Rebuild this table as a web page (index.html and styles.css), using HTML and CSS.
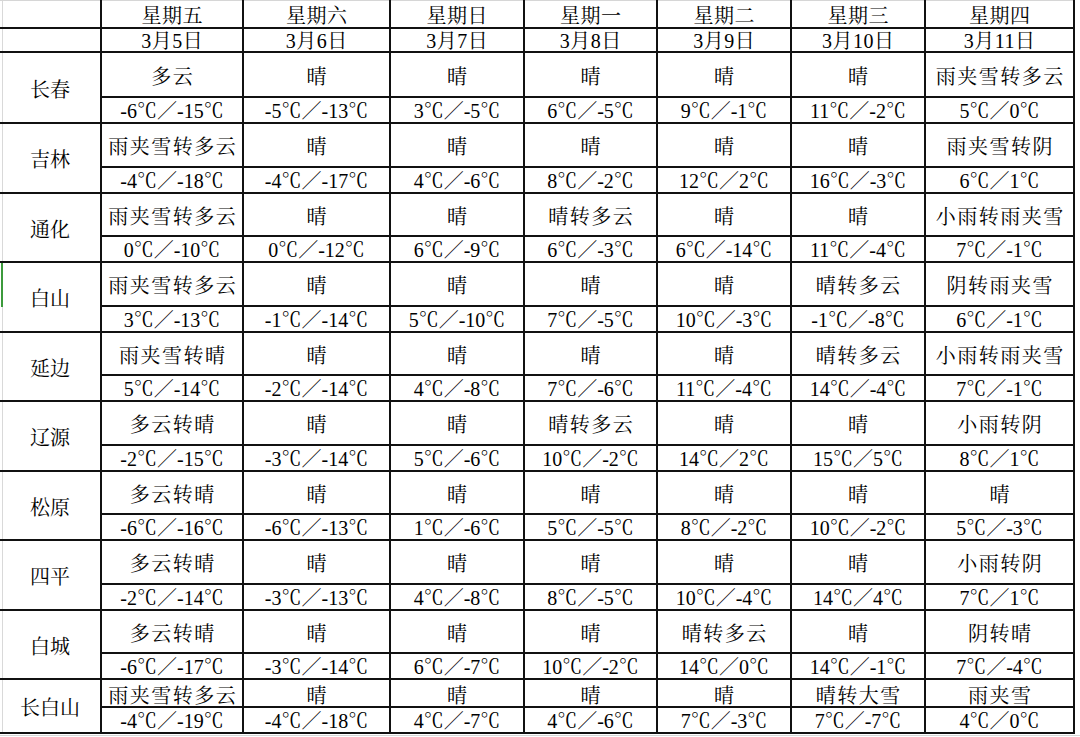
FILE: index.html
```html
<!DOCTYPE html>
<html lang="zh-CN">
<head>
<meta charset="utf-8">
<title>吉林省一周天气预报</title>
<link rel="stylesheet" href="styles.css">
</head>
<body>
<div class="sheet">
  <div class="grid">
    <div class="c hd top blank"></div>
    <div class="c hd top">星期五</div>
    <div class="c hd top">星期六</div>
    <div class="c hd top">星期日</div>
    <div class="c hd top">星期一</div>
    <div class="c hd top">星期二</div>
    <div class="c hd top">星期三</div>
    <div class="c hd top">星期四</div>

    <div class="c hd blank"></div>
    <div class="c hd">3月5日</div>
    <div class="c hd">3月6日</div>
    <div class="c hd">3月7日</div>
    <div class="c hd">3月8日</div>
    <div class="c hd">3月9日</div>
    <div class="c hd">3月10日</div>
    <div class="c hd">3月11日</div>

    <div class="c city">长春</div>
    <div class="c wx">多云</div><div class="c wx">晴</div><div class="c wx">晴</div><div class="c wx">晴</div><div class="c wx">晴</div><div class="c wx">晴</div><div class="c wx">雨夹雪转多云</div>
    <div class="c tp">-6℃／-15℃</div><div class="c tp">-5℃／-13℃</div><div class="c tp">3℃／-5℃</div><div class="c tp">6℃／-5℃</div><div class="c tp">9℃／-1℃</div><div class="c tp">11℃／-2℃</div><div class="c tp">5℃／0℃</div>

    <div class="c city">吉林</div>
    <div class="c wx">雨夹雪转多云</div><div class="c wx">晴</div><div class="c wx">晴</div><div class="c wx">晴</div><div class="c wx">晴</div><div class="c wx">晴</div><div class="c wx">雨夹雪转阴</div>
    <div class="c tp">-4℃／-18℃</div><div class="c tp">-4℃／-17℃</div><div class="c tp">4℃／-6℃</div><div class="c tp">8℃／-2℃</div><div class="c tp">12℃／2℃</div><div class="c tp">16℃／-3℃</div><div class="c tp">6℃／1℃</div>

    <div class="c city">通化</div>
    <div class="c wx">雨夹雪转多云</div><div class="c wx">晴</div><div class="c wx">晴</div><div class="c wx">晴转多云</div><div class="c wx">晴</div><div class="c wx">晴</div><div class="c wx">小雨转雨夹雪</div>
    <div class="c tp">0℃／-10℃</div><div class="c tp">0℃／-12℃</div><div class="c tp">6℃／-9℃</div><div class="c tp">6℃／-3℃</div><div class="c tp">6℃／-14℃</div><div class="c tp">11℃／-4℃</div><div class="c tp">7℃／-1℃</div>

    <div class="c city active">白山<span class="sel"></span></div>
    <div class="c wx">雨夹雪转多云</div><div class="c wx">晴</div><div class="c wx">晴</div><div class="c wx">晴</div><div class="c wx">晴</div><div class="c wx">晴转多云</div><div class="c wx">阴转雨夹雪</div>
    <div class="c tp">3℃／-13℃</div><div class="c tp">-1℃／-14℃</div><div class="c tp">5℃／-10℃</div><div class="c tp">7℃／-5℃</div><div class="c tp">10℃／-3℃</div><div class="c tp">-1℃／-8℃</div><div class="c tp">6℃／-1℃</div>

    <div class="c city">延边</div>
    <div class="c wx">雨夹雪转晴</div><div class="c wx">晴</div><div class="c wx">晴</div><div class="c wx">晴</div><div class="c wx">晴</div><div class="c wx">晴转多云</div><div class="c wx">小雨转雨夹雪</div>
    <div class="c tp">5℃／-14℃</div><div class="c tp">-2℃／-14℃</div><div class="c tp">4℃／-8℃</div><div class="c tp">7℃／-6℃</div><div class="c tp">11℃／-4℃</div><div class="c tp">14℃／-4℃</div><div class="c tp">7℃／-1℃</div>

    <div class="c city">辽源</div>
    <div class="c wx">多云转晴</div><div class="c wx">晴</div><div class="c wx">晴</div><div class="c wx">晴转多云</div><div class="c wx">晴</div><div class="c wx">晴</div><div class="c wx">小雨转阴</div>
    <div class="c tp">-2℃／-15℃</div><div class="c tp">-3℃／-14℃</div><div class="c tp">5℃／-6℃</div><div class="c tp">10℃／-2℃</div><div class="c tp">14℃／2℃</div><div class="c tp">15℃／5℃</div><div class="c tp">8℃／1℃</div>

    <div class="c city">松原</div>
    <div class="c wx">多云转晴</div><div class="c wx">晴</div><div class="c wx">晴</div><div class="c wx">晴</div><div class="c wx">晴</div><div class="c wx">晴</div><div class="c wx">晴</div>
    <div class="c tp">-6℃／-16℃</div><div class="c tp">-6℃／-13℃</div><div class="c tp">1℃／-6℃</div><div class="c tp">5℃／-5℃</div><div class="c tp">8℃／-2℃</div><div class="c tp">10℃／-2℃</div><div class="c tp">5℃／-3℃</div>

    <div class="c city">四平</div>
    <div class="c wx">多云转晴</div><div class="c wx">晴</div><div class="c wx">晴</div><div class="c wx">晴</div><div class="c wx">晴</div><div class="c wx">晴</div><div class="c wx">小雨转阴</div>
    <div class="c tp">-2℃／-14℃</div><div class="c tp">-3℃／-13℃</div><div class="c tp">4℃／-8℃</div><div class="c tp">8℃／-5℃</div><div class="c tp">10℃／-4℃</div><div class="c tp">14℃／4℃</div><div class="c tp">7℃／1℃</div>

    <div class="c city">白城</div>
    <div class="c wx">多云转晴</div><div class="c wx">晴</div><div class="c wx">晴</div><div class="c wx">晴</div><div class="c wx">晴转多云</div><div class="c wx">晴</div><div class="c wx">阴转晴</div>
    <div class="c tp">-6℃／-17℃</div><div class="c tp">-3℃／-14℃</div><div class="c tp">6℃／-7℃</div><div class="c tp">10℃／-2℃</div><div class="c tp">14℃／0℃</div><div class="c tp">14℃／-1℃</div><div class="c tp">7℃／-4℃</div>

    <div class="c city">长白山</div>
    <div class="c wx low">雨夹雪转多云</div><div class="c wx low">晴</div><div class="c wx low">晴</div><div class="c wx low">晴</div><div class="c wx low">晴</div><div class="c wx low">晴转大雪</div><div class="c wx low">雨夹雪</div>
    <div class="c tp">-4℃／-19℃</div><div class="c tp">-4℃／-18℃</div><div class="c tp">4℃／-7℃</div><div class="c tp">4℃／-6℃</div><div class="c tp">7℃／-3℃</div><div class="c tp">7℃／-7℃</div><div class="c tp">4℃／0℃</div>
  </div>
</div>
</body>
</html>
```
FILE: styles.css
```css
html, body {
  margin: 0;
  padding: 0;
  background: #fff;
}

body {
  font-family: "Liberation Serif", "Noto Serif CJK SC", "Noto Sans CJK SC", serif;
  font-size: 20px;
  color: #000;
  width: 1080px;
  height: 737px;
  overflow: hidden;
}

.sheet {
  width: 1080px;
  padding-bottom: 1px;
  border-bottom: 1px solid #d6d6d6;
}

.grid {
  display: grid;
  width: max-content;
  grid-template-columns: 100px 140px 145px 132px 131px 132px 132px 147px;
  grid-template-rows:
    27px 22px
    43px 24px
    42px 24px
    41px 24px
    42px 24px
    41px 24px
    42px 24px
    41px 24px
    42px 24px
    41px 24px
    26px 24px;
  gap: 2px;
  padding: 0 2px 2px 0;
  background: #111;
}

.c {
  background: #fff;
  display: flex;
  justify-content: center;
  align-items: center;
  line-height: 20px;
  white-space: nowrap;
}

.hd {
  align-items: flex-end;
  letter-spacing: 0.5px;
  padding-left: 0.5px;
}

.top {
  border-top: 1px solid #d6d6d6;
  padding-bottom: 1px;
}

.blank,
.city {
  background: linear-gradient(to right, #fff 2px, #d9d9d9 2px, #d9d9d9 3px, #fff 3px);
}

.city {
  grid-row: span 2;
  padding-top: 4px;
  position: relative;
}

.wx {
  padding-top: 4px;
  letter-spacing: 1.5px;
  padding-left: 1.5px;
}

.wx.low {
  align-items: flex-end;
  padding-top: 0;
}

.tp {
  align-items: flex-end;
  line-height: 22px;
}

.sel {
  position: absolute;
  left: 1px;
  top: 0;
  width: 2px;
  height: 44px;
  background: #3c9a3c;
}
```
